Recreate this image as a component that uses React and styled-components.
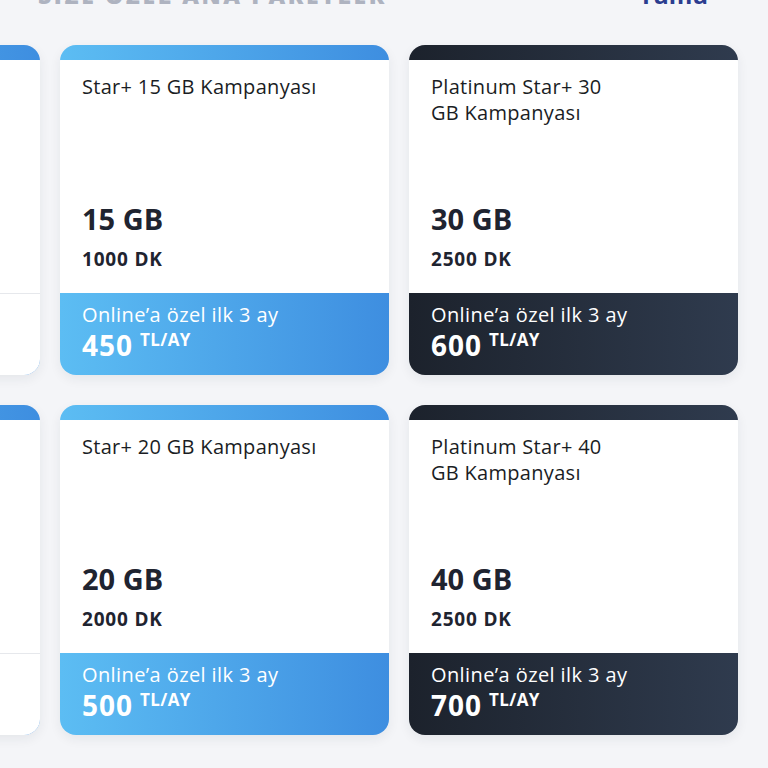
import React from "react";
import styled, { createGlobalStyle, css } from "styled-components";

const GlobalStyle = createGlobalStyle`
  html, body {
    margin: 0;
    padding: 0;
    background: #f4f5f8;
    font-family: "Open Sans", "Noto Sans", sans-serif;
    overflow: hidden;
  }
`;

const Page = styled.div`
  width: 768px;
  height: 768px;
  overflow: hidden;
  background: #f4f5f8;
`;

const Header = styled.div`
  display: flex;
  justify-content: space-between;
  align-items: flex-end;
  height: 28px;
  margin-top: -19px;
  padding: 0 60px 0 38px;
  line-height: 28px;
`;

const SectionTitle = styled.h2`
  margin: 0;
  font-size: 23px;
  line-height: 28px;
  font-weight: 800;
  letter-spacing: 2.6px;
  color: #aeb3c0;
`;

const SeeAll = styled.a`
  font-size: 24px;
  line-height: 28px;
  font-weight: 700;
  color: #2b3d8f;
  text-decoration: none;
`;

const Rows = styled.div`
  display: flex;
  flex-direction: column;
  gap: 30px;
  margin-top: 36px;
`;

const Track = styled.div`
  display: flex;
  gap: 20px;
  margin-left: -289px;
`;

const gradients = {
  blue: "linear-gradient(90deg, #5cbdf3 0%, #3e8ee0 100%)",
  dark: "linear-gradient(90deg, #1c222c 0%, #2f3b4e 100%)",
};

const Card = styled.div`
  flex: 0 0 329px;
  height: 330px;
  border-radius: 16px;
  overflow: hidden;
  display: flex;
  flex-direction: column;
  padding-top: 15px;
  box-sizing: border-box;
  background: ${(p) => gradients[p.$tone]};
  box-shadow: 0 4px 12px rgba(30, 40, 60, 0.07);
`;

const Body = styled.div`
  flex: 1;
  background: #ffffff;
  display: flex;
  flex-direction: column;
  padding: 14px 22px 22px;
`;

const Title = styled.div`
  font-size: 20px;
  line-height: 26px;
  letter-spacing: 0.3px;
  color: #1a1d24;
  white-space: pre-line;
`;

const Data = styled.div`
  margin-top: auto;
  font-size: 29px;
  font-weight: 700;
  color: #1f2430;
  line-height: 36px;
`;

const Minutes = styled.div`
  margin-top: 10px;
  font-size: 19px;
  font-weight: 700;
  letter-spacing: 0.8px;
  color: #1f2430;
  line-height: 24px;
`;

const Footer = styled.div`
  height: 82px;
  box-sizing: border-box;
  padding: 9px 22px 0;
  color: #ffffff;
  ${(p) =>
    p.$plain &&
    css`
      background: #ffffff;
      border-top: 1px solid #e6e8ec;
      color: #1f2430;
    `}
`;

const Note = styled.div`
  font-size: 20px;
  line-height: 26px;
  letter-spacing: 0.4px;
`;

const Price = styled.div`
  display: flex;
  align-items: flex-start;
  gap: 7px;
  margin-top: 2px;
`;

const Amount = styled.span`
  font-size: 28px;
  font-weight: 700;
  letter-spacing: 1px;
  line-height: 30px;
`;

const Unit = styled.span`
  font-size: 17px;
  font-weight: 700;
  letter-spacing: 0.4px;
  line-height: 20px;
`;

const rows = [
  [
    { tone: "blue", plain: true, title: "Star+ 10 GB Kampanyası", gb: "10 GB", dk: "1000 DK", price: "400" },
    { tone: "blue", title: "Star+ 15 GB Kampanyası", gb: "15 GB", dk: "1000 DK", price: "450" },
    { tone: "dark", title: "Platinum Star+ 30\nGB Kampanyası", gb: "30 GB", dk: "2500 DK", price: "600" },
  ],
  [
    { tone: "blue", plain: true, title: "Star+ 12 GB Kampanyası", gb: "12 GB", dk: "1000 DK", price: "420" },
    { tone: "blue", title: "Star+ 20 GB Kampanyası", gb: "20 GB", dk: "2000 DK", price: "500" },
    { tone: "dark", title: "Platinum Star+ 40\nGB Kampanyası", gb: "40 GB", dk: "2500 DK", price: "700" },
  ],
];

const PackageCard = ({ tone, plain, title, gb, dk, price }) => (
  <Card $tone={tone}>
    <Body>
      <Title>{title}</Title>
      <Data>{gb}</Data>
      <Minutes>{dk}</Minutes>
    </Body>
    <Footer $plain={plain}>
      {!plain && <Note>Online’a özel ilk 3 ay</Note>}
      <Price>
        <Amount>{price}</Amount>
        <Unit>TL/AY</Unit>
      </Price>
    </Footer>
  </Card>
);

export default function App() {
  return (
    <Page>
      <GlobalStyle />
      <Header>
        <SectionTitle>SİZE ÖZEL ANA PAKETLER</SectionTitle>
        <SeeAll href="#">Tümü</SeeAll>
      </Header>
      <Rows>
        {rows.map((row, i) => (
          <Track key={i}>
            {row.map((card) => (
              <PackageCard key={card.title} {...card} />
            ))}
          </Track>
        ))}
      </Rows>
    </Page>
  );
}
